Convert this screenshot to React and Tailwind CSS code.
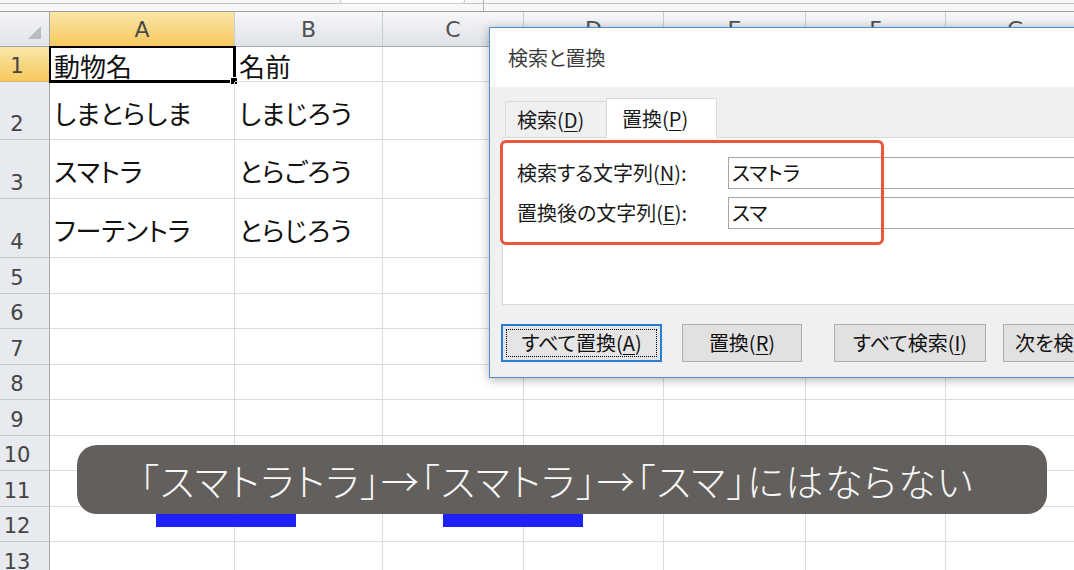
const cols = [
  { key: "A", w: "w-[185px]" },
  { key: "B", w: "w-[148px]" },
  { key: "C", w: "w-[141px]" },
  { key: "D", w: "w-[140px]" },
  { key: "E", w: "w-[142px]" },
  { key: "F", w: "w-[140px]" },
  { key: "G", w: "w-[140px]" },
];

const rows = [
  { n: 1, h: "h-[35px]", a: "動物名", b: "名前" },
  { n: 2, h: "h-[58px]", a: "しまとらしま", b: "しまじろう" },
  { n: 3, h: "h-[59px]", a: "スマトラ", b: "とらごろう" },
  { n: 4, h: "h-[59px]", a: "フーテントラ", b: "とらじろう" },
  ...[5, 6, 7, 8, 9, 10, 11, 12, 13].map((n) => ({ n, h: "h-[35.5px]" })),
];

function HeaderRow() {
  return (
    <div className="flex h-[35px] shrink-0">
      <div className="relative w-[50px] shrink-0 bg-gradient-to-b from-[#f3f4f6] to-[#e2e5e9] border-r border-b border-[#a3a8ae]">
        <svg className="absolute right-[8px] bottom-[7px]" width="13" height="13" viewBox="0 0 13 13">
          <polygon points="13,0 13,13 0,13" fill="#b9bdc2" />
        </svg>
      </div>
      {cols.map((c) => (
        <div
          key={c.key}
          className={`${c.w} shrink-0 flex items-center justify-center border-r border-b text-[22px] font-['DejaVu_Sans',sans-serif] ${
            c.key === "A"
              ? "bg-gradient-to-b from-[#fbe6a6] to-[#f6c95b] border-r-[#c9ccd0] border-b-[#e2a33c] text-[#4a4a4a]"
              : "bg-gradient-to-b from-[#f6f7f9] to-[#dfe2e7] border-r-[#c9ccd0] border-b-[#a3a8ae] text-[#505050]"
          }`}
        >
          {c.key}
        </div>
      ))}
    </div>
  );
}

function GridRow({ row }) {
  return (
    <div className={`flex ${row.h} shrink-0`}>
      <div
        className={`w-[50px] shrink-0 flex items-end pb-[3px] border-r border-b text-[21px] font-['DejaVu_Sans',sans-serif] ${
          row.n === 1
            ? "bg-gradient-to-b from-[#fbe6a6] to-[#f6c95b] border-r-[#e2a33c] border-b-[#d9b35f] text-[#444]"
            : "bg-[#e7eaee] border-r-[#a3a8ae] border-b-[#c3c7cc] text-[#444]"
        }`}
      >
        <span className="w-[34px] text-center leading-[24px]">{row.n}</span>
      </div>
      {cols.map((c) => (
        <div
          key={c.key}
          className={`relative ${c.w} shrink-0 flex items-center pt-[3px] pl-[4px] border-r border-b border-[#dadcde] text-[26px] text-[#111] whitespace-nowrap`}
        >
          {c.key === "A" && row.a}
          {c.key === "B" && row.b}
          {c.key === "A" && row.n === 1 && (
            <div className="absolute -left-px -top-px -right-[2px] -bottom-[2px] border-2 border-b-[3px] border-r-[3px] border-black">
              <div className="absolute -right-[5px] -bottom-[5px] w-[8px] h-[8px] bg-black border border-white" />
            </div>
          )}
        </div>
      ))}
    </div>
  );
}

function Mn({ children }) {
  return <span className="underline underline-offset-[3px] decoration-1">{children}</span>;
}

function Dialog() {
  return (
    <div className="absolute left-[489px] top-[27px] w-[640px] h-[351px] border border-[#4f8fd0] bg-[#f0f0f0] shadow-[0_2px_10px_rgba(0,0,0,0.3)] flex flex-col">
      <div className="h-[59px] shrink-0 bg-white flex items-center pl-[18px] text-[20px] text-[#3c3c3c]">
        検索と置換
      </div>
      <div className="flex flex-col pt-[11px] pl-[12px]">
        <div className="flex items-end h-[39px] pl-[3px]">
          <div className="w-[101px] h-[36px] border-t border-l border-[#d9d9d9] bg-[#f0f0f0] flex items-center pl-[11px] text-[20px] text-[#1a1a1a]">
            検索(<Mn>D</Mn>)
          </div>
          <div className="relative z-10 -mb-px w-[111px] h-[40px] bg-white border border-b-0 border-[#d9d9d9] flex items-center pl-[15px] text-[20px] text-[#1a1a1a]">
            置換(<Mn>P</Mn>)
          </div>
        </div>
        <div className="h-[168px] bg-white border border-[#d9d9d9] pt-[19px] pl-[14px] flex flex-col gap-[8px]">
          <div className="flex items-center">
            <div className="w-[211px] shrink-0 text-[20px] text-[#1a1a1a] whitespace-nowrap">
              検索する文字列(<Mn>N</Mn>):
            </div>
            <div className="flex-1 h-[32px] border border-[#a5a5a5] flex items-center pl-[3px] text-[20px] text-[#111]">
              スマトラ
            </div>
          </div>
          <div className="flex items-center">
            <div className="w-[211px] shrink-0 text-[20px] text-[#1a1a1a] whitespace-nowrap">
              置換後の文字列(<Mn>E</Mn>):
            </div>
            <div className="flex-1 h-[32px] border border-[#a5a5a5] flex items-center pl-[3px] text-[20px] text-[#111]">
              スマ
            </div>
          </div>
        </div>
        <div className="flex mt-[19px] -ml-px text-[20px] text-[#111]">
          <div className="shrink-0 w-[161px] h-[38px] border-2 border-[#2a7cd3] bg-[#e5e5e5] p-[3px]">
            <div className="h-full border border-dotted border-black flex items-center justify-center whitespace-nowrap">
              すべて置換(<Mn>A</Mn>)
            </div>
          </div>
          <div className="shrink-0 ml-[20px] w-[120px] h-[38px] border border-[#adadad] bg-[#e1e1e1] flex items-center justify-center whitespace-nowrap">
            置換(<Mn>R</Mn>)
          </div>
          <div className="shrink-0 ml-[32px] w-[152px] h-[38px] border border-[#adadad] bg-[#e1e1e1] flex items-center justify-center whitespace-nowrap">
            すべて検索(<Mn>I</Mn>)
          </div>
          <div className="shrink-0 ml-[17px] w-[150px] h-[38px] border border-[#adadad] bg-[#e1e1e1] flex items-center pl-[11px] whitespace-nowrap">
            次を検索(<Mn>F</Mn>)
          </div>
        </div>
      </div>
      <div className="absolute left-[10px] top-[112px] w-[384px] h-[105px] border-[3px] border-[#e9573e] rounded-[6px]" />
    </div>
  );
}

export default function App() {
  return (
    <div className="relative w-[1074px] h-[570px] overflow-hidden bg-white font-['Noto_Sans_CJK_JP',sans-serif] [font-feature-settings:'palt']">
      <div className="relative h-[12px] shrink-0 bg-[#f7f7f7] border-b border-[#9d9d9d]">
        <div className="h-[4px] border-b border-[#c4c4c4]" />
        <div className="absolute left-[340px] top-0 w-[125px] h-[4px] bg-white rounded-b-[3px] border border-t-0 border-[#cfcfcf]" />
        <div className="absolute left-[483px] top-0 h-[11px] border-l border-[#b5b5b5]" />
      </div>
      <div className="flex flex-col">
        <HeaderRow />
        {rows.map((r) => (
          <GridRow key={r.n} row={r} />
        ))}
      </div>

      <Dialog />

      <div className="absolute left-[77px] top-[445px] w-[970px] h-[69px] rounded-[20px] bg-[#5a5653]/95 flex items-center justify-center pr-[10px] text-[38px] tracking-[1.5px] font-light text-[#f7f7f7] whitespace-nowrap">
        「スマトラトラ」→「スマトラ」→「スマ」にはならない
      </div>
      <div className="absolute left-[156px] top-[514px] w-[140px] h-[13px] bg-[#1f22f6]" />
      <div className="absolute left-[443px] top-[514px] w-[140px] h-[13px] bg-[#1f22f6]" />
    </div>
  );
}
